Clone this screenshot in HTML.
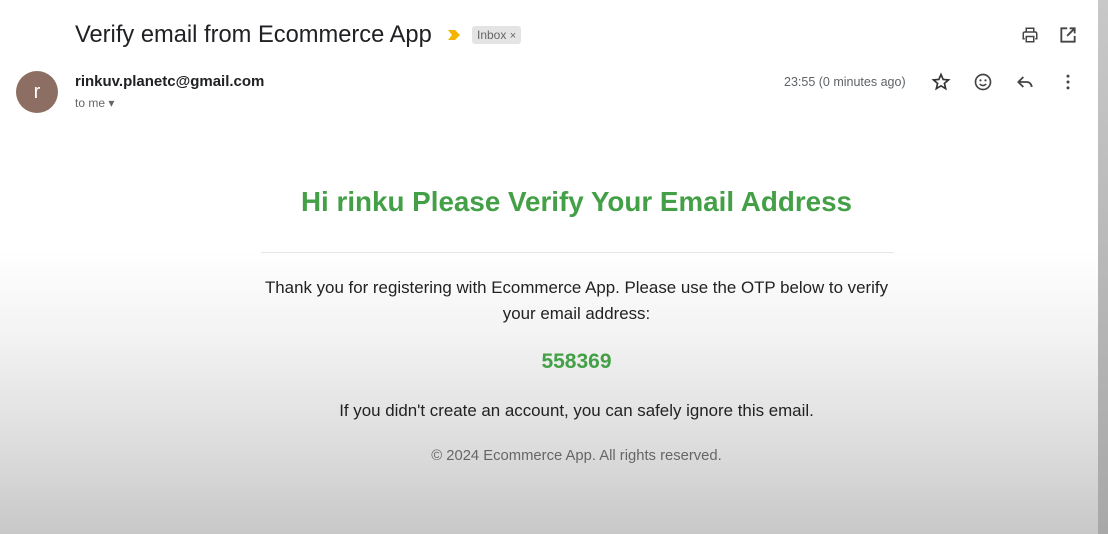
<!DOCTYPE html>
<html><head><meta charset="utf-8"><style>
body{margin:0;width:1108px;height:534px;overflow:hidden;font-family:"Liberation Sans",sans-serif;position:relative;
background:linear-gradient(to bottom,#fff 0px,#fff 250px,#f2f2f2 340px,#dedede 440px,#c8c8c8 534px);}
.sb{position:absolute;right:0;top:0;width:10px;height:534px;background:linear-gradient(#c8c8c8,#a8a8a8);}
.t{position:absolute;white-space:nowrap}
svg{position:absolute}
</style></head><body>
<div class="sb"></div>
<div class="t" style="left:75px;top:22px;font-size:23.7px;color:#202124">Verify email from Ecommerce App</div>
<svg style="left:447px;top:29px" width="14" height="12" viewBox="0 0 14 12"><path d="M1 1h7l5 5-5 5H1l4-5z" fill="#f4b400"/></svg>
<div class="t" style="left:472px;top:26px;background:#e4e4e4;color:#666;font-size:12px;padding:2px 5px;border-radius:3px">Inbox <span style="font-size:11px">×</span></div>
<svg style="left:1020px;top:26px" width="20" height="18" viewBox="0 0 24 24"><path d="M7 8V3h10v5M5 17H3v-7a2 2 0 012-2h14a2 2 0 012 2v7h-2M7 14h10v7H7z" fill="none" stroke="#444" stroke-width="2"/></svg>
<svg style="left:1058px;top:25px" width="20" height="20" viewBox="0 0 24 24"><path d="M11 4H4v16h16v-7M14 4h6v6M20 4l-9 9" fill="none" stroke="#444" stroke-width="2.2"/></svg>
<div style="position:absolute;left:16px;top:71px;width:42px;height:42px;border-radius:50%;background:#8d6e63;color:#fff;font-size:20px;text-align:center;line-height:42px">r</div>
<div class="t" style="left:75px;top:73px;font-size:15px;font-weight:bold;color:#202124">rinkuv.planetc@gmail.com</div>
<div class="t" style="left:75px;top:96px;font-size:12px;color:#666">to me ▾</div>
<div class="t" style="left:784px;top:75px;font-size:12.5px;color:#5f6368">23:55 (0 minutes ago)</div>
<svg style="left:931px;top:72px" width="20" height="20" viewBox="0 0 24 24"><path d="M12 3l2.6 6 6.4.5-4.9 4.2 1.5 6.3L12 16.6 6.4 20l1.5-6.3L3 9.5 9.4 9z" fill="none" stroke="#333" stroke-width="2"/></svg>
<svg style="left:973px;top:72px" width="20" height="20" viewBox="0 0 24 24"><circle cx="12" cy="12" r="9" fill="none" stroke="#444" stroke-width="2"/><circle cx="9" cy="10" r="1.3" fill="#444"/><circle cx="15" cy="10" r="1.3" fill="#444"/><path d="M8 14.5q4 3.5 8 0" fill="none" stroke="#444" stroke-width="1.8"/></svg>
<svg style="left:1015px;top:72px" width="20" height="20" viewBox="0 0 24 24"><path d="M10 6L4 12l6 6M4 12h10a6 6 0 016 6" fill="none" stroke="#444" stroke-width="2.2"/></svg>
<svg style="left:1058px;top:72px" width="20" height="20" viewBox="0 0 24 24"><circle cx="12" cy="5" r="1.8" fill="#444"/><circle cx="12" cy="12" r="1.8" fill="#444"/><circle cx="12" cy="19" r="1.8" fill="#444"/></svg>
<div class="t" style="left:0;width:1153px;text-align:center;top:186px;font-size:27.8px;font-weight:bold;color:#43a047">Hi rinku Please Verify Your Email Address</div>
<div style="position:absolute;left:261px;width:633px;top:252px;height:1px;background:#e6e6e6"></div>
<div class="t" style="left:0;width:1153px;text-align:center;top:275px;font-size:16.9px;color:#222;line-height:26px">Thank you for registering with Ecommerce App. Please use the OTP below to verify<br>your email address:</div>
<div class="t" style="left:0;width:1153px;text-align:center;top:350px;font-size:21px;font-weight:bold;color:#43a047">558369</div>
<div class="t" style="left:0;width:1153px;text-align:center;top:401px;font-size:16.9px;color:#222">If you didn't create an account, you can safely ignore this email.</div>
<div class="t" style="left:0;width:1153px;text-align:center;top:448px;font-size:14.8px;color:#666">© 2024 Ecommerce App. All rights reserved.</div>
</body></html>
